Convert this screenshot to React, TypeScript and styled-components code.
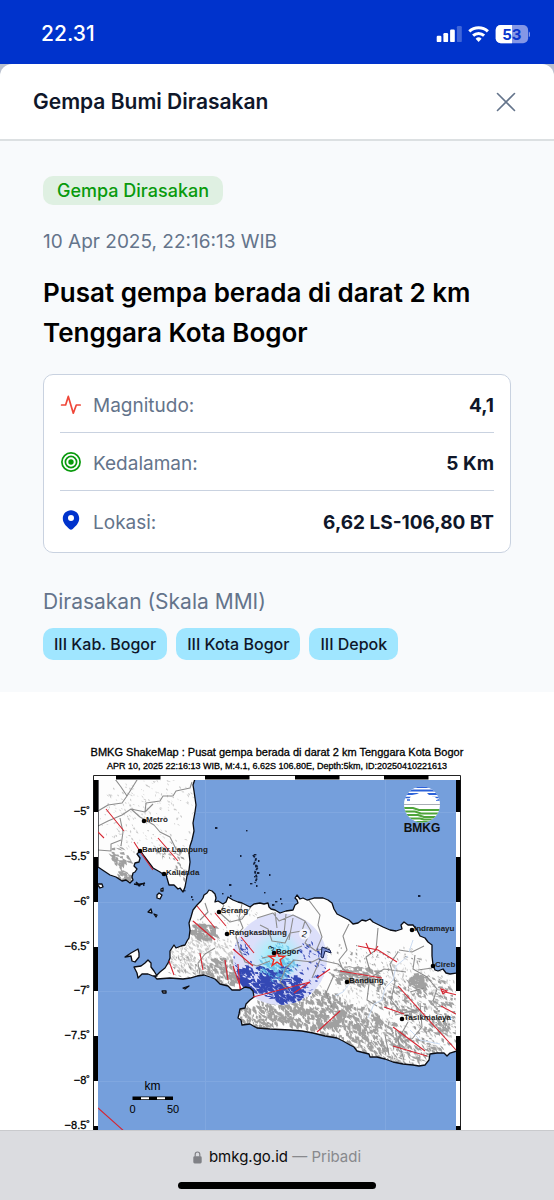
import React from "react";
import styled, { createGlobalStyle } from "styled-components";

const GlobalStyle = createGlobalStyle`
  * { box-sizing: border-box; }
  body {
    margin: 0;
    background: #ffffff;
    font-family: Inter, "Liberation Sans", sans-serif;
    color: #0f172a;
  }
  h1, h2, h3, p, dl, dd, ul { margin: 0; padding: 0; }
  button { font: inherit; border: 0; background: none; padding: 0; cursor: pointer; }
`;

const Screen = styled.div`
  min-height: 100vh;
  display: flex;
  flex-direction: column;
`;

const StatusBar = styled.div`
  height: 64px;
  display: flex;
  align-items: center;
  justify-content: space-between;
  padding: 3px 24px 0 41px;
  background: #0033cc;
  color: #ffffff;
  font-size: 21px;
  font-weight: 500;
`;

const SheetBackdrop = styled.div`
  background: #b9c0cf;
`;

const SheetHeader = styled.header`
  height: 77px;
  display: flex;
  align-items: center;
  justify-content: space-between;
  padding: 1px 36px 0 33px;
  background: #ffffff;
  border-bottom: 2px solid #dce0e2;
  border-radius: 12px 12px 0 0;
`;

const SheetTitle = styled.h1`
  font-size: 21px;
  line-height: 28px;
  font-weight: 600;
`;

const CloseButton = styled.button`
  display: flex;
  padding: 2px;
  color: #64748b;
`;

const Details = styled.section`
  display: flex;
  flex-direction: column;
  align-items: flex-start;
  padding: 35px 43px 32px;
  background: #f8fafc;
`;

const Tag = styled.span`
  padding: 0 14px;
  border-radius: 10px;
  background: #dff0e2;
  color: #089a0c;
  font-size: 18px;
  line-height: 29px;
  font-weight: 500;
`;

const Timestamp = styled.time`
  margin-top: 23px;
  font-size: 19px;
  line-height: 28px;
  color: #64748b;
`;

const Headline = styled.h2`
  margin-top: 17px;
  font-size: 26px;
  line-height: 40px;
  font-weight: 600;
  color: #000000;
`;

const Card = styled.dl`
  align-self: stretch;
  margin-top: 21px;
  padding: 0 16px 3px;
  background: #ffffff;
  border: 1px solid #c9d2e0;
  border-radius: 10px;
`;

const Row = styled.div`
  height: 58px;
  display: flex;
  align-items: center;
  gap: 11px;
  font-size: 19px;
  border-bottom: 1px solid #c9d2e0;
  &:last-child { border-bottom: 0; }
`;

const RowLabel = styled.dt`
  padding-top: 4px;
  flex: 1;
  color: #64748b;
`;

const RowValue = styled.dd`
  padding-top: 4px;
  font-weight: 700;
`;

const FeltTitle = styled.h3`
  margin-top: 35px;
  font-size: 21px;
  line-height: 28px;
  font-weight: 400;
  color: #64748b;
`;

const Chips = styled.ul`
  display: flex;
  flex-wrap: wrap;
  gap: 9px;
  margin-top: 12px;
  list-style: none;
`;

const Chip = styled.li`
  padding: 0 11px;
  border-radius: 10px;
  background: #a0e6ff;
  font-size: 16px;
  line-height: 32px;
  font-weight: 500;
`;

const MapFigure = styled.figure`
  flex: 1;
  margin: 0;
  background: #ffffff;
  svg { display: block; width: 100%; height: auto; }
`;

const BrowserBar = styled.footer`
  position: sticky;
  bottom: 0;
  height: 70px;
  display: flex;
  flex-direction: column;
  align-items: center;
  justify-content: space-between;
  padding: 15px 0 11px;
  background: #dbdce0;
  border-top: 1px solid #c9cacd;
`;

const Address = styled.button`
  display: flex;
  align-items: center;
  gap: 7px;
  font-size: 15px;
  line-height: 22px;
  color: #0b0b0c;
`;

const Mode = styled.span`
  color: #88898d;
`;

const HomeIndicator = styled.div`
  width: 198px;
  height: 7px;
  border-radius: 4px;
  background: #000000;
`;

const StatusIcons = () => (
  <svg width="94" height="20" viewBox="436 23 94 20" role="img" aria-label="Signal, Wi-Fi, battery 53%">
    <g fill="#fff">
      <rect x="436.7" y="34.7" width="4.7" height="6.4" rx="1.2" />
      <rect x="443.4" y="32" width="4.7" height="9.1" rx="1.2" />
      <rect x="450.1" y="28.6" width="4.7" height="12.5" rx="1.2" />
      <rect x="456.9" y="25" width="4.9" height="16.1" rx="1.2" opacity=".25" />
    </g>
    <g fill="none" stroke="#fff" strokeWidth="3">
      <path d="M469.3 30.4a13.4 13.4 0 0 1 18.6 0" />
      <path d="M473.1 34.6a8 8 0 0 1 11 0" />
    </g>
    <path d="M478.6 40.9l-3-3.2a4.4 4.4 0 0 1 6 0z" fill="#fff" />
    <rect x="495.7" y="24" width="32.4" height="18.3" rx="5" fill="#8497e6" />
    <path d="M500.7 24H512v18.3h-11.3a5 5 0 0 1-5-5V29a5 5 0 0 1 5-5z" fill="#fff" />
    <path d="M528.8 30.4q1.6.8 1.6 2.8t-1.6 2.8z" fill="#8497e6" />
    <text x="511.9" y="38.7" textAnchor="middle" fontFamily="Inter, sans-serif" fontWeight="700" fontSize="15" fill="#0a36cd">53</text>
  </svg>
);

const PulseIcon = () => (
  <svg width="22" height="22" viewBox="0 0 22 22" fill="none" stroke="#ef4638" strokeWidth="1.7" strokeLinecap="round" strokeLinejoin="round" aria-hidden="true">
    <path d="M1.6 12h4l2.700-8.600 5 16.800 3-8.200h3.900" />
  </svg>
);

const TargetIcon = () => (
  <svg width="22" height="22" viewBox="0 0 22 22" fill="none" stroke="#089a0c" strokeWidth="1.7" aria-hidden="true">
    <circle cx="11" cy="11" r="9.1" />
    <circle cx="11" cy="11" r="5.6" />
    <circle cx="11" cy="11" r="2.7" fill="#089a0c" stroke="none" />
  </svg>
);

const PinIcon = () => (
  <svg width="22" height="22" viewBox="0 0 22 22" aria-hidden="true">
    <path fillRule="evenodd" fill="#0033cc" d="M11 1.2c-4.6 0-8.2 3.6-8.2 8.1 0 4.600 3.100 7.500 6.500 10.800q1.700 1.500 3.400 0c3.400-3.300 6.500-6.200 6.500-10.800 0-4.500-3.600-8.100-8.200-8.100zM11 12.100a3 3 0 1 1 0-6 3 3 0 0 1 0 6z" />
  </svg>
);

/* ---------- shake map ---------- */

const SUMATRA =
  "M98 779H195L193 785 194 791 196 805 195 812 193 823 194 831 192 840 190 846 189 853 190 862 189 870 187 876 185 887 183 892 180 888 178 889 174 885 169 885 167 878 166 874 163 874 160 872 153 868 150 864 147 860 144 856 142 853 140 851 137 854 140 858 139 862 135 863 134 866 137 869 135 872 133 873 132 877 133 880 130 883 126 880 122 881 116 877 110 875 104 871 98 867z";

const JAVA =
  "M193 910L197 905 201 901 203 898 204 895 207 893 209 890 212 891 215 894 216 898 215 902 218 901 223 904 226 902 228 897 233 900 238 902 242 903 246 905 250 907 254 904 260 903 264 904 268 903 269 907 271 909 275 910 280 913 286 911 293 910 295 905 298 903 297 900 295 898 297 895 300 899 303 898 307 900 314 898 323 898 328 900 332 903 334 909 337 914 345 918 349 920 353 924 358 923 362 920 366 921 370 919 373 922 383 927 390 930 396 931 402 929 401 925 404 922 408 925 413 925 417 930 420 936 425 938 428 942 432 945 432 956 433 965 435 970 438 971 443 969 446 973 450 974 457 973V1051L450 1053 447 1056 444 1053 437 1053 430 1054 429 1060 425 1065 419 1066 413 1065 403 1064 393 1062 385 1059 377 1057 370 1057 369 1054 365 1053 357 1051 354 1047 350 1045 343 1041 337 1038 325 1036 313 1033 302 1031 290 1030 270 1029 257 1028 250 1024 242 1025 241 1020 238 1018 239 1014 240 1009 245 1008 246 1004 250 1000 254 997 253 991 250 988 245 987 240 990 232 990 228 986 220 984 215 979 210 977 204 975 197 976 190 978 183 979 170 978 157 979 155 977 160 972 165 968 168 963 170 958 170 951 174 945 176 948 181 946 185 945 187 941 189 938 190 930 189 923 191 917z";

const ISLANDS =
  "M134 967L141 966 145 963 148 960 151 963 151 967 154 971 157 976 153 976 148 974 142 974 138 978 137 973z M125 957L131 953 138 949 139 953 139 957 135 962 132 961 131 956z M161 889l2-1 0 3-2 0z M157 895l2-2 3 2-2 4-3-1z M97 884l5 0 1 3-3 1z M162 991l4 0 0 2-3 0z M183 988l6-2-4 3z M148 912l3-3 1 4z M154 914l3 1-1 2z";

type Patch = [cx: number, cy: number, rx: number, ry: number, count: number, angle: number, length: number, width: number];

/* Relief shading: short slanted strokes scattered inside elliptical patches. */
function hatch(seed: number, patches: Patch[]) {
  let s = seed;
  const rnd = () => {
    s = (s * 16807) % 2147483647;
    return s / 2147483647;
  };
  return patches
    .map(([cx, cy, rx, ry, n, angle, len, w]) => {
      let d = "";
      for (let i = 0; i < n; i++) {
        const t = rnd() * Math.PI * 2;
        const r = Math.sqrt(rnd());
        const a = ((angle + (rnd() - 0.5) * 70) * Math.PI) / 180;
        const l = len * (0.4 + rnd() * 0.9);
        const k = w * (0.4 + rnd());
        const x = cx + Math.cos(t) * rx * r;
        const y = cy + Math.sin(t) * ry * r;
        const dx = Math.cos(a) * l;
        const dy = Math.sin(a) * l;
        d += `M${x.toFixed(1)} ${y.toFixed(1)}l${(dx / 2 + k).toFixed(1)} ${(dy / 2 - k / 2).toFixed(1)} ${(dx / 2 - k / 2).toFixed(1)} ${(dy / 2 + k).toFixed(1)} ${(-dx / 2 - k).toFixed(1)} ${(-dy / 2).toFixed(1)}z`;
      }
      return d;
    })
    .join("");
}

const RELIEF_LIGHT = hatch(71, [
  [150, 815, 52, 40, 230, 50, 3, 0.7],
  [230, 945, 50, 40, 180, 60, 3, 0.7],
  [200, 955, 32, 22, 260, 55, 5, 0.9],
  [380, 975, 76, 30, 180, 60, 3, 0.8],
  [400, 1010, 60, 50, 320, 60, 4, 0.9],
]);

const RELIEF_DARK = hatch(29, [
  [118, 855, 10, 9, 26, 50, 6, 2],
  [122, 875, 10, 5, 22, 30, 5, 2],
  [168, 850, 14, 9, 24, 50, 5, 0.9],
  [180, 865, 6, 20, 20, 60, 4, 1],
  [200, 930, 13, 9, 60, 40, 7, 2],
  [222, 970, 22, 14, 140, 55, 5, 1.6],
  [182, 965, 20, 12, 36, 55, 4, 0.9],
  [262, 1013, 26, 14, 190, 60, 5, 1.4],
  [310, 1008, 38, 20, 340, 60, 5, 1.6],
  [345, 1022, 34, 20, 240, 60, 5, 1.6],
  [352, 975, 26, 8, 90, 20, 7, 2],
  [375, 1035, 30, 18, 150, 55, 5, 1.3],
  [400, 1050, 40, 14, 140, 50, 6, 1.1],
  [400, 995, 32, 18, 100, 55, 5, 1.3],
  [428, 1005, 28, 30, 140, 45, 5, 1.3],
  [416, 981, 9, 8, 50, 40, 5, 2],
  [440, 1035, 20, 16, 50, 50, 5, 1.3],
  [345, 955, 22, 14, 22, 50, 3, 0.9],
  [395, 960, 28, 10, 24, 50, 4, 0.9],
]);

const SHAKE_BLUE = hatch(53, [
  [253, 978, 20, 15, 130, 35, 6, 1.8],
  [280, 984, 22, 18, 150, 30, 7, 1.8],
  [240, 985, 10, 8, 40, 50, 5, 2],
  [284, 992, 26, 10, 40, 15, 6, 1.5],
  [240, 955, 12, 16, 36, 55, 4, 0.8],
  [305, 965, 20, 22, 34, 40, 4, 1],
  [310, 948, 12, 10, 16, 60, 4, 1],
]);

const SHAKE_CYAN = hatch(13, [
  [277, 960, 18, 18, 70, 45, 5, 1],
  [276, 968, 16, 12, 50, 40, 5, 1.4],
]);

const BORDERS =
  "M115 779l6 8 6 9-5 7-14 2-10 6 M127 796l10-16 M98 826l10-5 14-6 9-6 14 3 8-8 M145 812l1-9 14-2 3-5 10 0 3-5 14-3 2-6 M131 809l9 8 14 8 6 7 10 5 6 12 10 3 M120 818l3 14-2 14 M98 850l13 1 0-7 10-4 M205 903l3 9-8 8 M224 905l-4 8 10 9 12-3 9-12 M242 904l-3 14 4 10-7 8 3 12 M215 948l-10 6-7 9 2 12 M239 948l6 14 12 4 13-5 M257 918l16-5 6 8 14-6 12 6-3 10-12 2-5 10-13-2-4-12-8-4 M275 912l2 16 M286 914l-2 20 M293 918l-4 22 M305 921l6 10-6 12 11 8 12-4 M308 899l12 16-2 10 4 12-6 14 M349 924l-6 12 4 14-8 10 4 10 M378 928l-2 22-10 7 4 14 M262 958l20-4 20-8 M286 968l8-8 18 2 8-4 M286 968l-6 14 8 8 M312 978l8-18 18 4 10 9 22 5 14-9 22 3 M334 975l-8 18 6 14 M370 976l-3 24 10 6 M398 952l-8 12 5 18-4 18 10 12 M415 955l-2 14 14 8 10 12-4 12 M410 992l14-4 M420 1003l2 24-10 12 M395 1015l26-6 M385 1035l4 20 M408 1022l-10 18 6 20 M432 968l-14 2 M424 946l-12 6-13-2";

const FAULTS =
  "M106 809l18 22 M98 832l6 6 M158 838l20 23 M134 842l7 11 12 17 M197 906l18 22 M193 921l22 19 M215 913l11 13 M233 949l20 17 M241 937l13 16 M200 953l3 17 M169 961l5 14 M225 960l3 20 M233 966l8 23 M238 964l2 25 M253 997l57-15-16 11 M317 978l13-9 M317 1032l23-21 M340 971l42 7 M358 946l20 4 19 12 M366 943l5 11 M378 946l-4 6 M398 986l58 64 M384 1007l20 7 M393 1027l32 24 M393 1046l34 10 M441 991l16 4 M441 989l2 5 4-3z M441 1006l15 8 M98 1108l27 24";

const ISLETS: [number, number][] = [
  [215, 827], [246, 830], [240, 855], [254, 854], [258, 860], [255, 866], [257, 872], [254, 876], [269, 874], [250, 883],
  [256, 885], [264, 892], [229, 884], [222, 893], [230, 895], [275, 901], [280, 898], [281, 903], [418, 895], [192, 899],
  [191, 896], [138, 885], [143, 884], [184, 890], [272, 904],
];

const CITIES: { name: string; x: number; y: number }[] = [
  { name: "Metro", x: 144, y: 821 },
  { name: "Bandar Lampung", x: 140, y: 851 },
  { name: "Kalianda", x: 164, y: 874 },
  { name: "Serang", x: 219, y: 912 },
  { name: "Rangkasbitung", x: 227, y: 934 },
  { name: "Bogor", x: 274, y: 953 },
  { name: "Indramayu", x: 412, y: 930 },
  { name: "Cireb", x: 433, y: 966 },
  { name: "Bandung", x: 347, y: 982 },
  { name: "Tasikmalaya", x: 402, y: 1019 },
];

const LATITUDES: [string, number][] = [
  ["−5˚", 812], ["−5.5˚", 857], ["−6˚", 902], ["−6.5˚", 947], ["−7˚", 991], ["−7.5˚", 1036], ["−8˚", 1081], ["−8.5˚", 1126],
];

const SIDE_BLACKS: [number, number][] = [[780, 32], [857, 45], [947, 44], [1036, 45], [1126, 4]];
const TOP_BLACKS = [116, 205, 295, 384];

const ShakeMap = () => (
  <svg viewBox="0 692 554 438" role="img" aria-label="BMKG ShakeMap" fontFamily="'Liberation Sans', sans-serif">
    <defs>
      <clipPath id="plot"><rect x="98" y="780" width="358" height="350" /></clipPath>
      <clipPath id="land"><path d={SUMATRA + JAVA + ISLANDS} /></clipPath>
      <clipPath id="felt"><ellipse cx="280" cy="959" rx="47" ry="46" /></clipPath>
      <clipPath id="disc"><circle cx="422" cy="804.500" r="18" /></clipPath>
      <radialGradient id="core">
        <stop offset="0" stopColor="#7fe8f7" />
        <stop offset=".5" stopColor="#b4ecfa" />
        <stop offset="1" stopColor="#dcdffa" />
      </radialGradient>
    </defs>

    <g stroke="#000" strokeWidth=".3">
      <text x="277" y="756" fontSize="11" textAnchor="middle">BMKG ShakeMap : Pusat gempa berada di darat 2 km Tenggara Kota Bogor</text>
      <text x="277" y="769" fontSize="9" textAnchor="middle">APR 10, 2025 22:16:13 WIB, M:4.1, 6.62S 106.80E, Depth:5km, ID:20250410221613</text>
      {LATITUDES.map(([label, y]) => (
        <text key={label} x="90" y={y + 3} fontSize="11" textAnchor="end">{label}</text>
      ))}
    </g>

    <path d="M93.500 1130V775.500H460.500V1130" fill="#fff" stroke="#222" />
    {TOP_BLACKS.map((x) => <rect key={x} x={x} y="775" width="44.500" height="4.500" />)}
    {SIDE_BLACKS.map(([y, h]) => (
      <g key={y}>
        <rect x="93.500" y={y} width="4.500" height={h} />
        <rect x="456" y={y} width="4.500" height={h} />
      </g>
    ))}

    <g clipPath="url(#plot)">
      <rect x="98" y="780" width="358" height="350" fill="#759fdc" />
      <path d="M205.500 780v350M385.500 780v350M98 812.500h358M98 902.500h358M98 991.500h358M98 1081.500h358" stroke="#80a7e0" />
      <path d={SUMATRA + JAVA + ISLANDS} fill="#fdfdfd" />
      <g clipPath="url(#land)">
        <path d={RELIEF_LIGHT} fill="#cacaca" />
        <path d={RELIEF_DARK} fill="#a0a0a0" />
        <g clipPath="url(#felt)">
          <rect x="230" y="910" width="100" height="100" fill="#dcdffa" />
          <circle cx="277" cy="957" r="27" fill="url(#core)" />
          <path d={SHAKE_BLUE} fill="#3448b4" />
          <path d={SHAKE_CYAN} fill="#55b8e4" opacity=".75" />
        </g>
        <path d={BORDERS} fill="none" stroke="#8d8d8d" strokeWidth="1.100" strokeLinejoin="round" />
      </g>
      <path d="M335 996l8-4 6-8M368 1018l6-14 8-4 3-12 8-8 3-14 12-10M410 1030l10 10 20 4M413 940l-4 12" fill="none" stroke="#ccdcf2" />
      <path d="M321 957l1-10 8 3 1 3-6-2-2 7z" fill="#7b8fd4" stroke="#111c4a" strokeWidth="1" />
      <path d={SUMATRA + JAVA + ISLANDS} fill="none" stroke="#0b0d14" strokeWidth="1.300" strokeLinejoin="round" />
      {ISLETS.map(([x, y], i) => <rect key={i} x={x} y={y} width={i % 3 ? 1.5 : 2.4} height={i % 2 ? 1.4 : 2} fill="#14203a" />)}
      <path d="M253 855l3 4-2 5 4 3-3 5 2 6-2 5" fill="none" stroke="#14203a" strokeWidth="1.800" strokeDasharray="3 1" />
      <path d="M134 884l5 1 6-2M136 882l4 4" stroke="#0b0d14" strokeWidth="1.600" />
      <path d={FAULTS} fill="none" stroke="#d62531" strokeWidth="1.100" />
      <path d="M277 951l2 5.200h5.800l-4.700 3.500 1.800 5.800-4.900-3.500-4.900 3.500 1.800-5.800-4.700-3.500h5.800z" fill="#fff" fillOpacity=".5" stroke="#ee2b22" strokeWidth="1.400" />
      <circle cx="304.500" cy="934" r="5.500" fill="#f4f5fd" />
      <text x="304.500" y="937" fontSize="9" textAnchor="middle" transform="rotate(14 304 934)">2</text>
      <text x="271" y="951" fontSize="8" textAnchor="middle" transform="rotate(-60 271 948)">3</text>
      {CITIES.map((c) => (
        <g key={c.name}>
          <circle cx={c.x} cy={c.y} r="2.300" />
          <text x={c.x + 2} y={c.y + 1} fontSize="8" fontWeight="700" fill="#1c1c1c">{c.name}</text>
        </g>
      ))}

      <g clipPath="url(#disc)">
        <rect x="404" y="786" width="36" height="37" fill="#fff" />
        <path d="M404 787h36M404 790.500h36M404 794h36" stroke="#2c62d8" strokeWidth="2" />
        <path d="M404 797.500h8M432 797.500h8M407 800h3M436 800h4" stroke="#2c62d8" strokeWidth="1.500" />
        <path d="M409 799l3-4 5-1 4-2 6 1 3 3 5 1 3 3z" fill="#fff" />
        <path d="M404 804.500h36" stroke="#a9aeb5" strokeWidth="1" />
        <path d="M404 808h9l6 2h21M404 811.500h11l6 2h19M406 815h12l6 2h14M408 818.500h12l4 1h12M412 822h20" fill="none" stroke="#4ea53a" strokeWidth="2.200" />
      </g>
      <text x="422" y="832" fontSize="12" fontWeight="700" textAnchor="middle" fill="#111">BMKG</text>

      <text x="152.500" y="1090" fontSize="12" textAnchor="middle">km</text>
      <rect x="132.500" y="1096.500" width="40.500" height="3.500" />
      <path d="M141 1098.300h8M157 1098.300h8" stroke="#fff" strokeWidth="2" />
      <text x="132.500" y="1113" fontSize="11" textAnchor="middle">0</text>
      <text x="173" y="1113" fontSize="11" textAnchor="middle">50</text>
    </g>
  </svg>
);

const FACTS = [
  { label: "Magnitudo:", value: "4,1", Icon: PulseIcon },
  { label: "Kedalaman:", value: "5 Km", Icon: TargetIcon },
  { label: "Lokasi:", value: "6,62 LS-106,80 BT", Icon: PinIcon },
];

const FELT = ["III Kab. Bogor", "III Kota Bogor", "III Depok"];

export default function App() {
  return (
    <>
      <GlobalStyle />
      <Screen>
        <StatusBar>
          <span>22.31</span>
          <StatusIcons />
        </StatusBar>
        <SheetBackdrop>
          <SheetHeader>
            <SheetTitle>Gempa Bumi Dirasakan</SheetTitle>
            <CloseButton type="button" aria-label="Tutup">
              <svg width="20" height="20" viewBox="0 0 20 20" fill="none" stroke="currentColor" strokeWidth="1.600" strokeLinecap="round">
                <path d="M1.500 1.500l17 17M18.500 1.500l-17 17" />
              </svg>
            </CloseButton>
          </SheetHeader>
        </SheetBackdrop>
        <Details>
          <Tag>Gempa Dirasakan</Tag>
          <Timestamp dateTime="2025-04-10T22:16:13+07:00">10 Apr 2025, 22:16:13 WIB</Timestamp>
          <Headline>Pusat gempa berada di darat 2 km Tenggara Kota Bogor</Headline>
          <Card>
            {FACTS.map(({ label, value, Icon }) => (
              <Row key={label}>
                <Icon />
                <RowLabel>{label}</RowLabel>
                <RowValue>{value}</RowValue>
              </Row>
            ))}
          </Card>
          <FeltTitle>Dirasakan (Skala MMI)</FeltTitle>
          <Chips>
            {FELT.map((place) => <Chip key={place}>{place}</Chip>)}
          </Chips>
        </Details>
        <MapFigure>
          <ShakeMap />
        </MapFigure>
        <BrowserBar>
          <Address type="button">
            <svg width="9" height="13" viewBox="0 0 9 13" aria-hidden="true">
              <rect x="0.300" y="5.300" width="8.400" height="7.200" rx="1.400" fill="#808186" />
              <path d="M2.200 5.800V3.300a2.300 2.300 0 0 1 4.600 0v2.500" fill="none" stroke="#808186" strokeWidth="1.200" />
            </svg>
            <span>bmkg.go.id <Mode>— Pribadi</Mode></span>
          </Address>
          <HomeIndicator />
        </BrowserBar>
      </Screen>
    </>
  );
}
